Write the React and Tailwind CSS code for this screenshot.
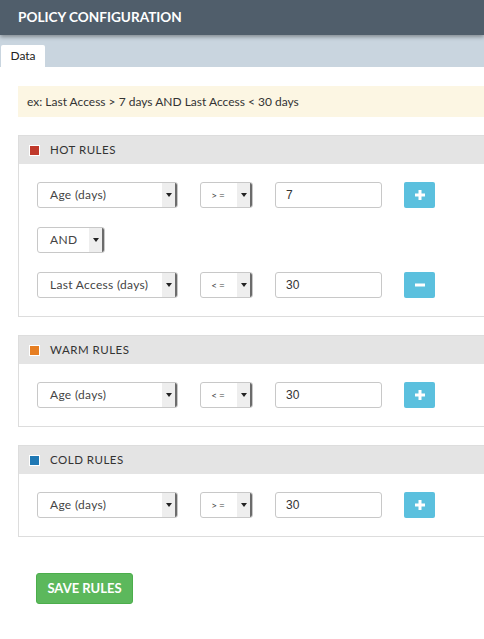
import React from "react";

function Caret() {
  return (
    <span className="flex h-full w-[15px] items-center justify-center border-r-2 border-[#6b6b6b] bg-[#eeeeee]">
      <svg width="6" height="4" viewBox="0 0 6 4">
        <path d="M0 0h6L3 4z" fill="#222" />
      </svg>
    </span>
  );
}

function Select({ value, width }) {
  return (
    <div
      className="flex h-[26px] items-stretch overflow-hidden rounded-[3px] border border-[#c8c8c8] bg-white"
      style={{ width }}
    >
      <span className="flex flex-1 items-center pl-[12px] text-[12px] tracking-[0.3px] text-[#444]">
        {value}
      </span>
      <Caret />
    </div>
  );
}

function OpSelect({ value }) {
  return (
    <div className="flex h-[26px] w-[53px] items-stretch overflow-hidden rounded-[3px] border border-[#c8c8c8] bg-white">
      <span className="flex flex-1 items-center justify-center text-[10px] tracking-[2px] text-[#444]">
        {value}
      </span>
      <Caret />
    </div>
  );
}

function ActionBtn({ minus }) {
  return (
    <button className="flex h-[26px] w-[31px] items-center justify-center rounded-[2px] bg-[#5bc0de]">
      <svg width="10" height="10" viewBox="0 0 10 10">
        {minus ? (
          <rect x="0" y="3.5" width="10" height="3" fill="#fff" />
        ) : (
          <path d="M3.5 0h3v3.5H10v3H6.5V10h-3V6.5H0v-3h3.5z" fill="#fff" />
        )}
      </svg>
    </button>
  );
}

function RuleRow({ field, op, value, minus }) {
  return (
    <div className="flex items-center gap-[22px]">
      <Select value={field} width="141px" />
      <OpSelect value={op} />
      <div className="flex h-[26px] w-[107px] items-center rounded-[3px] border border-[#c8c8c8] bg-white pl-[10px] font-['Liberation_Sans',sans-serif] text-[12px] text-[#333]">
        {value}
      </div>
      <ActionBtn minus={minus} />
    </div>
  );
}

function Panel({ title, color, children }) {
  return (
    <div className="border border-r-0 border-[#dddddd]">
      <div className="flex h-[28px] items-center gap-[10px] bg-[#e4e4e4] pl-[10px]">
        <span className={`h-[11px] w-[11px] border border-white ${color}`} />
        <span className="text-[11.5px] tracking-[0.5px] text-[#333]">{title}</span>
      </div>
      <div className="flex flex-col gap-[19px] py-[18px] pl-[18px]">{children}</div>
    </div>
  );
}

export default function App() {
  return (
    <div className="min-h-[639px] bg-white font-['Lato','Open_Sans',sans-serif]">
      <header className="relative z-10 flex h-[35px] items-center bg-[#505e6b] pl-[18px] shadow-[0_2px_4px_rgba(0,0,0,0.35)]">
        <h1 className="text-[13.6px] font-bold text-white">POLICY CONFIGURATION</h1>
      </header>
      <div className="flex h-[32px] items-end bg-[#c9d5df] pl-px">
        <div className="flex h-[22px] w-[44px] items-center justify-center rounded-t-[2px] bg-white text-[12px] text-[#222]">
          Data
        </div>
      </div>

      <div className="flex flex-col pl-[18px] pt-[19px]">
        <div className="flex h-[31px] items-center bg-[#fcf6e3] pl-[9px] text-[12px] text-[#333]">
          ex: Last Access &gt; 7 days AND Last Access &lt; 30 days
        </div>

        <div className="mt-[18px] flex flex-col gap-[18px]">
          <Panel title="HOT RULES" color="bg-[#c0392b]">
            <RuleRow field="Age (days)" op=">=" value="7" />
            <div className="flex">
              <div className="flex h-[26px] w-[68px] items-stretch overflow-hidden rounded-[3px] border border-[#c8c8c8] bg-white">
                <span className="flex flex-1 items-center pl-[12px] text-[12px] tracking-[0.3px] text-[#444]">AND</span>
                <Caret />
              </div>
            </div>
            <RuleRow field="Last Access (days)" op="<=" value="30" minus />
          </Panel>
          <Panel title="WARM RULES" color="bg-[#e67e22]">
            <RuleRow field="Age (days)" op="<=" value="30" />
          </Panel>
          <Panel title="COLD RULES" color="bg-[#1f78b4]">
            <RuleRow field="Age (days)" op=">=" value="30" />
          </Panel>
        </div>

        <div className="mt-[36px] pl-[18px]">
          <button className="h-[31px] w-[97px] rounded-[3px] border border-[#4cae4c] bg-[#5cb85c] text-[13px] font-bold text-white">
            SAVE RULES
          </button>
        </div>
      </div>
    </div>
  );
}
